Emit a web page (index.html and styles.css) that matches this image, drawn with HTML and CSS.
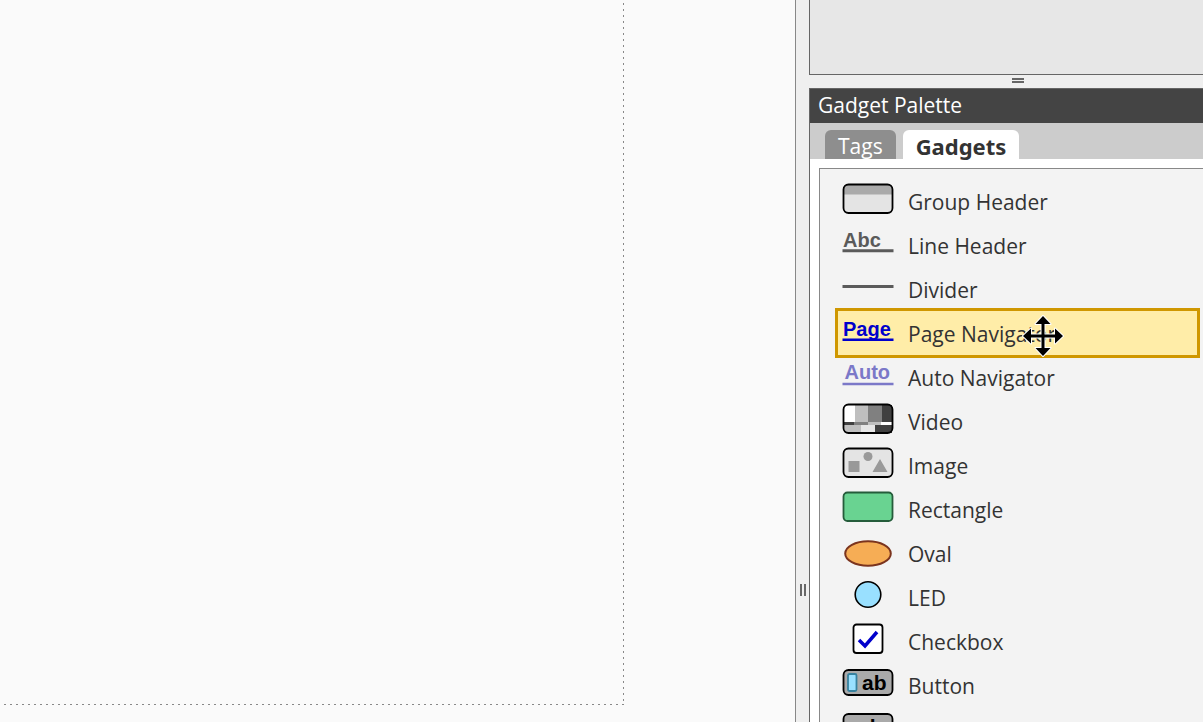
FILE: index.html
```html
<!DOCTYPE html>
<html lang="en">
<head>
<meta charset="utf-8">
<title>Page Editor</title>
<link rel="stylesheet" href="styles.css">
</head>
<body>
<div class="editor">
  <main class="canvas"><div class="page"></div></main>
  <div class="splitter splitter-vertical"><span class="grip grip-vertical"></span></div>
  <aside class="sidebar">
    <section class="upper-panel"></section>
    <div class="splitter splitter-horizontal"><span class="grip"></span></div>
    <section class="palette">
      <h1 class="title">Gadget Palette</h1>
      <div class="tabs" role="tablist">
        <button class="tab" role="tab" aria-selected="false">Tags</button>
        <button class="tab tab-active" role="tab" aria-selected="true">Gadgets</button>
      </div>
      <div class="tab-body">
        <ul class="gadgets">
          <li class="gadget">
            <svg class="icon" viewBox="0 0 52 32"><rect x="1.500" y="1.500" width="49" height="28.500" rx="5" fill="#e4e4e4"/><path d="M1.500 11.500V6.500a5 5 0 0 1 5-5h39a5 5 0 0 1 5 5v5z" fill="#aaa"/><rect x="1.500" y="1.500" width="49" height="28.500" rx="5" fill="none" stroke="#000" stroke-width="1.800"/></svg>
            <span>Group Header</span>
          </li>
          <li class="gadget">
            <svg class="icon" viewBox="0 0 52 32"><text class="icon-text" x="1" y="20" fill="#5a5a5a">Abc</text><path d="M.5 23.800h51" stroke="#5a5a5a" stroke-width="3"/></svg>
            <span>Line Header</span>
          </li>
          <li class="gadget">
            <svg class="icon" viewBox="0 0 52 32"><path d="M.5 15.500h51" stroke="#5a5a5a" stroke-width="3"/></svg>
            <span>Divider</span>
          </li>
          <li class="gadget gadget-selected">
            <svg class="icon" viewBox="0 0 52 32"><text class="icon-text" x="1" y="21" fill="#00c">Page</text><path d="M.5 24.800h51" stroke="#00c" stroke-width="2.500"/></svg>
            <span class="label">Page Navigator
              <svg class="move-cursor" viewBox="0 0 42 42"><path d="M21 1L28.500 9H22.500V19.500H33V13.500L41 21L33 28.500V22.500H22.500V33H28.500L21 41L13.500 33H19.500V22.500H9V28.500L1 21L9 13.500V19.500H19.500V9H13.500Z" fill="#000" stroke="#fff" stroke-width="2" paint-order="stroke" stroke-linejoin="round"/></svg>
            </span>
          </li>
          <li class="gadget">
            <svg class="icon" viewBox="0 0 52 32"><text class="icon-text" x="2.500" y="20" fill="#7b78c8">Auto</text><path d="M.5 25h51" stroke="#7b78c8" stroke-width="2.500"/></svg>
            <span>Auto Navigator</span>
          </li>
          <li class="gadget">
            <svg class="icon" viewBox="0 0 52 32"><path d="M2 2h11v18H2z" fill="#fff"/><path d="M13 2h13v18H13z" fill="#bfbfbf"/><path d="M26 2h14v18H26z" fill="#808080"/><path d="M40 2h10v18H40z" fill="#404040"/><path d="M2 19h10v3H2z" fill="#404040"/><path d="M12 19h14v3H12z" fill="#808080"/><path d="M26 19h13v3H26z" fill="#bfbfbf"/><path d="M39 19h11v3H39z" fill="#fff"/><path d="M2 22h17v8H3z" fill="#bfbfbf"/><path d="M19 22h14v8H19z" fill="#e6e6e6"/><path d="M33 22h17v8H33z" fill="#404040"/><rect x="1.500" y="1.500" width="49" height="28.500" rx="5" fill="none" stroke="#000" stroke-width="1.800"/></svg>
            <span>Video</span>
          </li>
          <li class="gadget">
            <svg class="icon" viewBox="0 0 52 32"><rect x="1.500" y="1.500" width="49" height="28.500" rx="5" fill="#e4e4e4" stroke="#000" stroke-width="1.800"/><path d="M6.500 14h11v11h-11zM30.500 25L38 12L45.500 25z" fill="#999"/><circle cx="26" cy="9.500" r="4.500" fill="#999"/></svg>
            <span>Image</span>
          </li>
          <li class="gadget">
            <svg class="icon" viewBox="0 0 52 32"><rect x="1.500" y="1.500" width="49" height="28.500" rx="4" fill="#69d391" stroke="#255c3b" stroke-width="1.800"/></svg>
            <span>Rectangle</span>
          </li>
          <li class="gadget">
            <svg class="icon" viewBox="0 0 52 32"><ellipse cx="26" cy="18.500" rx="22.800" ry="12.300" fill="#f6ad55" stroke="#7b341e" stroke-width="2"/></svg>
            <span>Oval</span>
          </li>
          <li class="gadget">
            <svg class="icon" viewBox="0 0 52 32"><circle cx="26" cy="15.500" r="12.800" fill="#99e0ff" stroke="#000" stroke-width="1.600"/></svg>
            <span>LED</span>
          </li>
          <li class="gadget">
            <svg class="icon" viewBox="0 0 52 32"><rect x="11.500" y="1.500" width="29" height="28.500" rx="3" fill="#fff" stroke="#000" stroke-width="1.800"/><path d="M17 17l6 6L35 9" fill="none" stroke="#00c" stroke-width="3.500"/></svg>
            <span>Checkbox</span>
          </li>
          <li class="gadget">
            <svg class="icon" viewBox="0 0 52 32"><rect x="1.500" y="3" width="49" height="25" rx="5" fill="#aaa" stroke="#000" stroke-width="1.800"/><rect x="6" y="7" width="8.500" height="17" rx="1.500" fill="#99e0ff" stroke="#37829f" stroke-width="1.800"/><text class="icon-text icon-text-large" x="20" y="23">ab</text></svg>
            <span>Button</span>
          </li>
          <li class="gadget">
            <svg class="icon" viewBox="0 0 52 32"><rect x="1.500" y="3" width="49" height="25" rx="5" fill="#aaa" stroke="#000" stroke-width="1.800"/><text class="icon-text icon-text-large" x="16" y="23">ab</text></svg>
            <span>Command Button</span>
          </li>
        </ul>
      </div>
    </section>
  </aside>
</div>
</body>
</html>
```
FILE: styles.css
```css
* { box-sizing: border-box; }
body {
  margin: 0;
  overflow: hidden;
  background: #fafafa;
  color: #333;
  font-family: Tahoma, "Open Sans", "Noto Sans", sans-serif;
  font-size: 21px;
}
.editor { display: flex; height: 100vh; }
.canvas {
  flex: 1;
  display: flex;
  padding: 0 171px 17px 0;
  background: #fafafa;
}
.page {
  flex: 1;
  background:
    repeating-linear-gradient(to bottom, transparent 0 3px, #888 3px 5px, transparent 5px 6px) right top / 1px 100% no-repeat,
    repeating-linear-gradient(to left, #888 0 2px, transparent 2px 6px) left bottom / 100% 1px no-repeat;
}
.splitter { flex: none; background: #efefef; }
.splitter-vertical {
  width: 14px;
  padding: 584px 0 0 4px;
  border-left: 1px solid #888;
}
.splitter-horizontal { height: 13px; padding: 3px 0 0 203px; }
.grip {
  display: block;
  width: 12px;
  height: 5px;
  border: solid #666;
  border-width: 2px 0;
}
.grip-vertical { width: 6px; height: 12px; border-width: 0 2px; }
.sidebar {
  width: 394px;
  flex: none;
  display: flex;
  flex-direction: column;
}
.upper-panel {
  flex: none;
  height: 75px;
  background: #e7e7e7;
  border: solid #666;
  border-width: 0 0 1px 1px;
}
.palette {
  flex: 1;
  min-height: 0;
  display: flex;
  flex-direction: column;
  border: solid #666;
  border-width: 1px 0 0 1px;
  background: #fff;
}
.title {
  flex: none;
  height: 34px;
  margin: 0;
  padding: 0 8px;
  background: #444;
  color: #fff;
  font-size: 21px;
  font-weight: 400;
  line-height: 32px;
}
.tabs {
  flex: none;
  display: flex;
  gap: 7px;
  height: 36px;
  padding: 7px 15px 0;
  background: #ccc;
}
.tab {
  padding: 0 13px;
  border: 0;
  border-radius: 6px 6px 0 0;
  background: #8e8e8e;
  color: #fff;
  font: inherit;
  line-height: 32px;
}
.tab-active {
  background: #fff;
  color: #333;
  font-family: Tahoma, "Noto Sans", sans-serif;
  font-size: 22px;
  font-weight: 700;
}
.tab-body { flex: 1; min-height: 0; display: flex; padding: 9px 0 0 9px; }
.gadgets {
  flex: 1;
  margin: 0;
  padding: 10px 6px 0 18px;
  overflow: hidden;
  list-style: none;
  background: #f3f3f3;
  border: solid #888;
  border-width: 1px 0 0 1px;
}
.gadget {
  display: flex;
  align-items: flex-start;
  gap: 14px;
  height: 44px;
  padding: 4px 4px 0;
  line-height: 38px;
  white-space: nowrap;
}
.gadget-selected { background: #ffeda8; outline: 3px solid #cf9700; }
.icon { flex: none; width: 52px; height: 32px; }
.icon-text { font: 700 20px "Liberation Sans", Arial, sans-serif; }
.icon-text-large { font-size: 21px; }
.label { position: relative; }
.move-cursor { position: absolute; top: 0; left: 114px; width: 42px; height: 42px; }
```
